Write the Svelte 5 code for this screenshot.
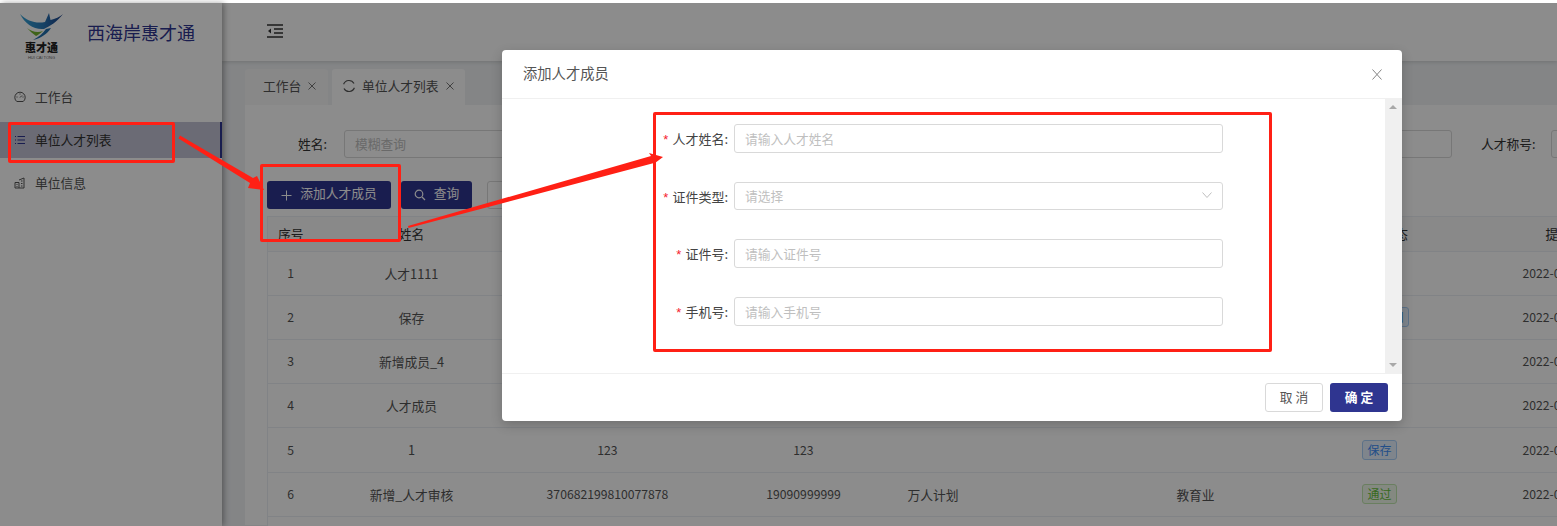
<script lang="ts">
	const menu = [
		{ label: "工作台", icon: "gauge" },
		{ label: "单位人才列表", icon: "list", active: true },
		{ label: "单位信息", icon: "building" },
	];

	const rows = [
		{ no: 1, name: "人才1111", id: "", phone: "", title: "", trade: "", state: "" },
		{ no: 2, name: "保存", id: "", phone: "", title: "", trade: "", state: "审核驳回" },
		{ no: 3, name: "新增成员_4", id: "", phone: "", title: "", trade: "", state: "" },
		{ no: 4, name: "人才成员", id: "", phone: "", title: "", trade: "", state: "" },
		{ no: 5, name: "1", id: "123", phone: "123", title: "", trade: "", state: "保存" },
		{ no: 6, name: "新增_人才审核", id: "370682199810077878", phone: "19090999999", title: "万人计划", trade: "教育业", state: "通过" },
	];

	const fields = [
		{ label: "人才姓名", placeholder: "请输入人才姓名" },
		{ label: "证件类型", placeholder: "请选择", select: true },
		{ label: "证件号", placeholder: "请输入证件号" },
		{ label: "手机号", placeholder: "请输入手机号" },
	];
</script>

<div class="page">
	<div class="layout">
		<aside class="sidebar">
			<div class="brand">
				<div class="logo">
					<svg width="43" height="27" viewBox="0 0 43 27">
						<defs>
							<linearGradient id="wing" x1="0" y1="0" x2="1" y2="0">
								<stop offset="0" stop-color="#35a5d8" />
								<stop offset="0.55" stop-color="#2a78b8" />
								<stop offset="1" stop-color="#1d3f86" />
							</linearGradient>
						</defs>
						<path d="M0 1 C7 8 16 11 25 9 L29 0 L30.5 7 C35 6 40 4 43 1 C37 9 30 13 24 16 C14 17 5 11 0 1Z" fill="url(#wing)" />
						<path d="M7 15 C12 19 18 20 23 18 C20 20.5 18 22 16 23 C13 21 10 18 7 15Z" fill="#74b52f" />
						<path d="M26 16 C23 20 19 24 13 27 C21 25 27 21 31 15Z" fill="#1f6fae" />
					</svg>
					<span class="logo-text">惠才通</span>
					<span class="logo-sub">HUI CAI TONG</span>
				</div>
				<span class="brand-name">西海岸惠才通</span>
			</div>
			<nav class="menu">
				{#each menu as item}
					<div class="menu-item" class:active={item.active}>
						<svg width="12" height="12" viewBox="0 0 12 12" fill="none" stroke="currentColor" stroke-width="1">
							{#if item.icon === "gauge"}
								<path d="M2.8 10.5 A5.2 5.2 0 1 1 9.2 10.5 Z" />
								<path d="M6 6.5 L8 4.5 M2.5 6 H3.5 M8.5 6 H9.5 M6 2.5 V3.5" />
							{:else if item.icon === "list"}
								<path d="M3.5 2.5 H11 M3.5 6 H11 M3.5 9.5 H11 M1 2.5 H2 M1 6 H2 M1 9.5 H2" />
							{:else}
								<path d="M1 5.5 H5 V11 H1 Z M5 3 L10 1 V11 H5 M2.5 7.5 H3.5 M2.5 9.5 H3.5 M7 4 H8.5 M7 6.5 H8.5 M7 9 H8.5" />
							{/if}
						</svg>
						<span>{item.label}</span>
					</div>
				{/each}
			</nav>
		</aside>

		<div class="main">
			<header class="topbar">
				<svg width="16" height="14" viewBox="0 0 16 14" fill="none" stroke="#333" stroke-width="1.3">
					<path d="M0 1 H16 M7 5 H16 M7 9 H16 M0 13 H16" />
					<path d="M4 4.5 L1 7 L4 9.5 Z" fill="#333" stroke="none" />
				</svg>
			</header>

			<div class="tabs">
				<div class="tab">
					<span>工作台</span>
					<svg class="tab-x" width="8" height="8" viewBox="0 0 8 8" stroke="#777"><path d="M0.5 0.5 L7.5 7.5 M7.5 0.5 L0.5 7.5" /></svg>
				</div>
				<div class="tab current">
					<svg class="spin" width="14" height="14" viewBox="0 0 14 14" fill="none" stroke="#555" stroke-width="1.2">
						<path d="M1.6 5.2 A5.7 5.7 0 0 1 12 4.6 M12.4 8.8 A5.7 5.7 0 0 1 2 9.4" />
					</svg>
					<span>单位人才列表</span>
					<svg class="tab-x" width="8" height="8" viewBox="0 0 8 8" stroke="#777"><path d="M0.5 0.5 L7.5 7.5 M7.5 0.5 L0.5 7.5" /></svg>
				</div>
			</div>

			<section class="content">
				<div class="filters">
					<span class="filter-name">姓名:</span>
					<div class="filter-input wide"><span>模糊查询</span></div>
					<span class="filter-title">人才称号:</span>
					<div class="filter-input cut"></div>
				</div>
				<div class="actions">
					<button class="btn primary add">
						<svg width="11" height="11" viewBox="0 0 11 11" stroke="currentColor" stroke-width="1"><path d="M5.5 0.5 V10.5 M0.5 5.5 H10.5" /></svg>
						<span>添加人才成员</span>
					</button>
					<button class="btn primary search">
						<svg width="12" height="12" viewBox="0 0 12 12" fill="none" stroke="currentColor" stroke-width="1.2"><circle cx="5" cy="5" r="3.8" /><path d="M8 8 L11 11" /></svg>
						<span>查询</span>
					</button>
					<button class="btn plain">重置</button>
				</div>

				<table class="grid">
					<colgroup>
						<col style="width:46px" />
						<col style="width:196px" />
						<col style="width:196px" />
						<col style="width:196px" />
						<col style="width:200px" />
						<col style="width:188px" />
						<col style="width:180px" />
						<col />
					</colgroup>
					<thead>
						<tr>
							<th class="no">序号</th>
							<th>姓名</th>
							<th>证件号</th>
							<th>手机号</th>
							<th>人才称号</th>
							<th>行业</th>
							<th class="state">状态</th>
							<th class="date">提交时间</th>
						</tr>
					</thead>
					<tbody>
						{#each rows as row}
							<tr class:tall={row.no === 5}>
								<td class="num">{row.no}</td>
								<td>{row.name}</td>
								<td class="num">{row.id}</td>
								<td class="num">{row.phone}</td>
								<td class="left">{row.title}</td>
								<td>{row.trade}</td>
								<td>
									{#if row.state}
										<span class="tag" class:ok={row.state === "通过"}>{row.state}</span>
									{/if}
								</td>
								<td class="date num">2022-03-01</td>
							</tr>
						{/each}
						<tr><td colspan="8"></td></tr>
					</tbody>
				</table>
			</section>
		</div>
	</div>

	<div class="mask"></div>

	<div class="modal">
		<div class="modal-head">
			<span class="modal-title">添加人才成员</span>
			<svg class="close" width="10" height="11" viewBox="0 0 10 11" stroke="#858585" stroke-width="1"><path d="M0.5 0.5 L9.5 10.5 M9.5 0.5 L0.5 10.5" /></svg>
		</div>
		<div class="modal-body">
			<form class="form">
				{#each fields as field}
					<div class="form-row">
						<span class="form-label"><i>*</i>{field.label}:</span>
						<div class="form-input" class:select={field.select}>
							<span>{field.placeholder}</span>
							{#if field.select}
								<svg width="10" height="6" viewBox="0 0 10 6" fill="none" stroke="#bfbfbf"><path d="M0.5 0.5 L5 5.5 L9.5 0.5" /></svg>
							{/if}
						</div>
					</div>
				{/each}
			</form>
			<div class="scrollbar">
				<span class="arrow up"></span>
				<span class="arrow down"></span>
			</div>
		</div>
		<div class="modal-foot">
			<button class="btn outline">取 消</button>
			<button class="btn confirm">确 定</button>
		</div>
	</div>

	<!-- red marks drawn on the screenshot -->
	<span class="mark mark-menu"></span>
	<span class="mark mark-add"></span>
	<span class="mark mark-form"></span>
	<svg class="arrows" width="1557" height="526" viewBox="0 0 1557 526">
		<polygon points="180,135.5 253,178 257,176 264,190 248,188 250,183 178.5,138.5" fill="#ff2015" />
		<polygon points="408,226 651,156 649,153 663,157 655,163 654,163 408.5,228" fill="#ff2015" />
	</svg>
</div>

<style>
	:global(body) {
		margin: 0;
	}

	.page {
		position: relative;
		width: 1557px;
		height: 526px;
		padding-top: 3px;
		box-sizing: border-box;
		overflow: hidden;
		background: #fff;
		font-family: "Noto Sans CJK SC", "Liberation Sans", sans-serif;
		font-size: 12.75px;
		color: #555;
	}

	.layout {
		display: flex;
		height: 523px;
	}

	.sidebar {
		flex: 0 0 222px;
		background: #fff;
		box-shadow: 2px 0 6px rgba(0, 0, 0, 0.35);
		position: relative;
		z-index: 2;
	}

	.brand {
		display: flex;
		align-items: flex-start;
		height: 58px;
		padding: 10px 0 0 20px;
		box-sizing: border-box;
	}

	.logo {
		width: 43px;
		display: flex;
		flex-direction: column;
		align-items: center;
		margin-right: 24px;
	}

	.logo svg {
		display: block;
	}

	.logo-text {
		font-weight: 900;
		font-size: 11px;
		line-height: 13px;
		color: #222;
		margin-top: 1px;
	}

	.logo-sub {
		font-family: "Liberation Sans", sans-serif;
		font-size: 4px;
		line-height: 4px;
		color: #666;
		white-space: nowrap;
		margin-top: 2px;
	}

	.brand-name {
		font-size: 18px;
		line-height: 26px;
		color: #2f3590;
		margin-top: 6px;
	}

	.menu {
		margin-top: 18px;
	}

	.menu-item {
		display: flex;
		align-items: center;
		gap: 9px;
		height: 36px;
		margin-bottom: 7px;
		padding-left: 14px;
		color: #555;
		box-sizing: border-box;
	}

	.menu-item span {
		padding-bottom: 2px;
	}

	.menu-item.active {
		background: #c4c4d6;
		border-right: 2px solid #2f3590;
		color: #2f3590;
	}

	.menu-item.active span {
		color: #333;
	}

	.main {
		flex: 1;
		min-width: 0;
		background: #f0f2f5;
		overflow: hidden;
	}

	.topbar {
		height: 58px;
		background: #fff;
		display: flex;
		align-items: center;
		padding: 0 0 3px 45px;
		box-shadow: 0 1px 4px rgba(0, 0, 0, 0.15);
		box-sizing: border-box;
	}

	.tabs {
		display: flex;
		gap: 4px;
		padding: 8px 0 0 23px;
		height: 44px;
		box-sizing: border-box;
	}

	.tab {
		display: flex;
		align-items: center;
		padding: 0 0 4px 18px;
		background: #f7f7f8;
		border-radius: 3px 3px 0 0;
		color: #555;
		width: 83px;
		box-sizing: border-box;
		white-space: nowrap;
	}

	.tab.current {
		background: #fff;
		width: 133px;
		padding-left: 10px;
	}

	.spin {
		flex-shrink: 0;
		margin: 2px 6px 0 0;
	}

	.tab-x {
		flex-shrink: 0;
		margin: 2px 0 0 7px;
	}

	.content {
		margin-left: 23px;
		height: 420px;
		background: #fff;
		padding: 25px 0 0 22px;
		box-sizing: border-box;
	}

	.filters {
		display: flex;
		align-items: center;
		height: 28px;
		width: 1400px;
		color: #333;
	}

	.filter-name {
		margin-left: 31px;
		width: 46px;
		padding-bottom: 1px;
	}

	.filter-input {
		height: 28px;
		box-sizing: border-box;
		border: 1px solid #d9d9d9;
		border-radius: 3px;
		color: #bfbfbf;
		display: flex;
		align-items: center;
		padding: 0 0 1px 10px;
	}

	.filter-input.wide {
		width: 1108px;
	}

	.filter-title {
		margin-left: 29px;
		width: 70px;
		white-space: nowrap;
		padding-bottom: 1px;
	}

	.filter-input.cut {
		width: 60px;
	}

	.actions {
		display: flex;
		gap: 10px;
		margin-top: 23px;
	}

	.btn {
		height: 28px;
		border-radius: 3px;
		border: 1px solid transparent;
		font: inherit;
		display: inline-flex;
		align-items: center;
		justify-content: center;
		gap: 8px;
		padding: 0 0 2px;
		box-sizing: border-box;
		white-space: nowrap;
	}

	.btn.primary {
		background: #2f3590;
		color: #fff;
		padding-bottom: 5px;
	}

	.btn.primary svg {
		flex-shrink: 0;
		margin-top: 5px;
	}

	.btn.add {
		width: 124px;
	}

	.btn.search {
		width: 71px;
	}

	.btn.plain {
		background: #fff;
		border-color: #d9d9d9;
		margin-left: 5px;
		width: 70px;
	}

	.grid {
		margin-top: 7px;
		width: 1400px;
		table-layout: fixed;
		border-collapse: collapse;
		border: 1px solid #ebeef5;
		color: #555;
	}

	.grid th {
		height: 33px;
		padding: 0 0 1px;
		font-weight: 400;
		color: #333;
		background: #fafafa;
		border-bottom: 1px solid #ebeef5;
		white-space: nowrap;
	}

	.grid th.no {
		text-align: left;
		padding-left: 10px;
	}

	.grid th.state {
		text-align: left;
		padding-left: 93px;
	}

	.grid th.date {
		text-align: left;
		padding-left: 76px;
	}

	.grid td {
		height: 42px;
		padding: 0 0 1px;
		text-align: center;
		border-bottom: 1px solid #ebeef5;
		background: #fff;
	}

	.grid tr.tall td {
		height: 43px;
	}

	.grid td.num {
		font-size: 12.2px;
	}

	.grid td.left {
		text-align: left;
		padding-left: 6px;
	}

	.grid td.date {
		text-align: left;
		padding-left: 53px;
		white-space: nowrap;
	}

	.tag {
		display: inline-block;
		padding: 0 4px;
		height: 20px;
		line-height: 17px;
		box-sizing: border-box;
		font-size: 12px;
		color: #3e8ef7;
		background: #e8f3ff;
		border: 1px solid #a9d0f8;
		border-radius: 3px;
	}

	.tag.ok {
		color: #67c23a;
		background: #f0f9eb;
		border-color: #c2e7b0;
	}

	.mask {
		position: absolute;
		inset: 3px 0 0 0;
		background: rgba(0, 0, 0, 0.45);
		z-index: 5;
	}

	.modal {
		position: absolute;
		left: 502px;
		top: 50px;
		width: 900px;
		height: 371px;
		background: #fff;
		border-radius: 4px;
		z-index: 6;
		display: flex;
		flex-direction: column;
		box-shadow: 0 4px 12px rgba(0, 0, 0, 0.2);
		color: #333;
	}

	.modal-head {
		flex: 0 0 49px;
		box-sizing: border-box;
		border-bottom: 1px solid #f0f0f0;
		display: flex;
		align-items: center;
		justify-content: space-between;
		padding: 0 20px 0 21px;
		font-size: 14.3px;
		color: #555;
	}

	.modal-title {
		margin-top: -4px;
	}

	.modal-body {
		flex: 1;
		display: flex;
		min-height: 0;
	}

	.form {
		flex: 1;
		padding-top: 25px;
	}

	.form-row {
		display: flex;
		align-items: center;
		height: 29px;
		margin-bottom: 28.7px;
	}

	.form-label {
		width: 232px;
		box-sizing: border-box;
		text-align: right;
		padding-right: 6px;
		font-size: 13px;
		color: #444;
	}

	.form-label i {
		color: #f5222d;
		font-style: normal;
		margin-right: 4px;
		font-family: "Liberation Sans", sans-serif;
	}

	.form-input {
		width: 489px;
		height: 29px;
		box-sizing: border-box;
		border: 1px solid #d9d9d9;
		border-radius: 3px;
		color: #bfbfbf;
		display: flex;
		align-items: center;
		justify-content: space-between;
		padding: 0 10px 1px;
	}

	.form-input.select {
		height: 28px;
		margin-bottom: 1px;
	}

	.scrollbar {
		flex: 0 0 17px;
		background: #f0f0f0;
		position: relative;
	}

	.arrow {
		position: absolute;
		left: 4px;
		width: 0;
		height: 0;
		border-left: 4px solid transparent;
		border-right: 4px solid transparent;
	}

	.arrow.up {
		top: 6px;
		border-bottom: 4px solid #a8a8a8;
	}

	.arrow.down {
		bottom: 6px;
		border-top: 4px solid #a8a8a8;
	}

	.modal-foot {
		flex: 0 0 48px;
		box-sizing: border-box;
		border-top: 1px solid #f0f0f0;
		display: flex;
		justify-content: flex-end;
		align-items: flex-start;
		gap: 7px;
		padding: 9px 14px 0 0;
	}

	.btn.outline {
		width: 58px;
		height: 29px;
		background: #fff;
		border-color: #d9d9d9;
		color: #555;
	}

	.btn.confirm {
		width: 58px;
		height: 29px;
		background: #2f3590;
		color: #fff;
		font-weight: 700;
	}

	.mark {
		position: absolute;
		border: 3px solid #ff2015;
		border-radius: 2px;
		box-sizing: border-box;
		z-index: 7;
	}

	.mark-menu {
		left: 8px;
		top: 122px;
		width: 167px;
		height: 41px;
	}

	.mark-add {
		left: 260px;
		top: 164px;
		width: 141px;
		height: 78px;
	}

	.mark-form {
		left: 653px;
		top: 112px;
		width: 619px;
		height: 240px;
	}

	.arrows {
		position: absolute;
		inset: 0;
		z-index: 8;
		pointer-events: none;
	}
</style>
